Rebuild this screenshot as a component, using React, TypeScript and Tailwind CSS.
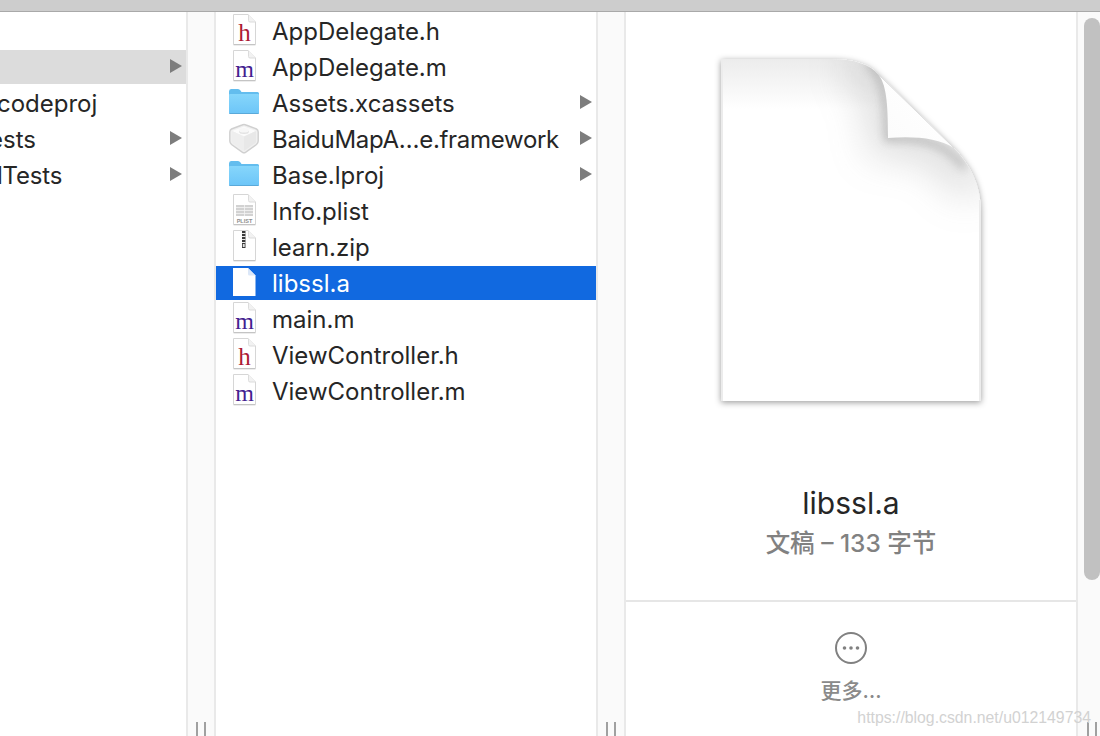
import React from "react";

const FONT = "[font-family:Inter,'Noto_Sans_CJK_SC',sans-serif]";

function DocShape({ fill = "#fff" }: { fill?: string }) {
  return (
    <>
      <path d="M5.500 .5H20L27.500 8V30Q27.500 30.500 27 30.500H6Q5.500 30.500 5.500 30Z" fill={fill} stroke="#d6d6d6" strokeWidth="1" />
      <path d="M5.500 30.800H27.500" stroke="#b5b5b5" strokeWidth=".8" />
      <path d="M20.500 .5V6.500Q20.500 8 22 8H27.500" fill="#f2f2f2" stroke="#dcdcdc" strokeWidth="1" />
    </>
  );
}

function LetterDoc({ letter }: { letter: "h" | "m" }) {
  return (
    <svg width="32" height="34" viewBox="0 0 32 34" className="shrink-0">
      <DocShape />
      <text
        x="16.500"
        y="26.500"
        textAnchor="middle"
        fontSize={letter === "h" ? 25 : 24}
        fontFamily="'Liberation Serif', serif"
        fill={letter === "h" ? "#ad1b35" : "#43208f"}
      >
        {letter}
      </text>
    </svg>
  );
}

function FolderIcon() {
  return (
    <svg width="32" height="34" viewBox="0 0 32 34" className="shrink-0">
      <defs>
        <linearGradient id="fold" x1="0" y1="0" x2="0" y2="1">
          <stop offset="0" stopColor="#86d6fb" />
          <stop offset="1" stopColor="#6cc5f8" />
        </linearGradient>
      </defs>
      <path d="M1 5.500Q1 3 3 3H10Q11.500 3 12.500 4.500L13.500 6H29.500Q31 6 31 7.500V12H1Z" fill="#63bdee" />
      <path d="M1 9Q1 8 2 8H30Q31 8 31 9V26.500Q31 28 29.500 28H2.500Q1 28 1 26.500Z" fill="url(#fold)" />
      <path d="M1 27H31V26.500Q31 28 29.500 28H2.500Q1 28 1 26.500Z" fill="#5aa9d9" />
    </svg>
  );
}

function FrameworkIcon() {
  return (
    <svg width="32" height="34" viewBox="0 0 32 34" className="shrink-0">
      <path
        d="M16 2.500Q17 2.500 18 3L28.500 7Q30.200 7.800 30.200 10V19Q30.200 21 28.500 22.500L17.500 30.300Q16 31.200 14.500 30.300L3.500 22.500Q1.800 21 1.800 19V10Q1.800 7.800 3.500 7L14 3Q15 2.500 16 2.500Z"
        fill="#f0f0f0"
        stroke="#d0d0d0"
        strokeWidth="1.400"
      />
      <path d="M4 9L16 14.500L28 9L16 4.500Z" fill="#fbfbfb" />
      <path d="M16 14.500V29L4 20.500V9Z" fill="#eeeeee" />
      <path d="M16 14.500V29L28 20.500V9Z" fill="#e8e8e8" />
      <ellipse cx="16" cy="9.500" rx="5" ry="2.500" fill="#e2e2e2" />
      <ellipse cx="16" cy="8.300" rx="5" ry="2.300" fill="#f7f7f7" />
    </svg>
  );
}

function PlistIcon() {
  return (
    <svg width="32" height="34" viewBox="0 0 32 34" className="shrink-0">
      <DocShape />
      <rect x="8" y="11" width="17" height="11" fill="#d2d2d2" />
      <path d="M8 13.500H25M8 16.500H25M8 19.500H25M16.500 11V22" stroke="#f4f4f4" strokeWidth=".8" />
      <text x="16.500" y="28.500" textAnchor="middle" fontSize="5.500" fontWeight="600" fontFamily="'Liberation Sans', sans-serif" fill="#8c8c8c">
        PLIST
      </text>
    </svg>
  );
}

function ZipIcon() {
  return (
    <svg width="32" height="34" viewBox="0 0 32 34" className="shrink-0">
      <DocShape />
      <rect x="14" y="1" width="3.500" height="17" fill="#3a3a3a" />
      <path d="M14 3.500H17.500M14 6.500H17.500M14 9.500H17.500M14 12.500H17.500" stroke="#e8e8e8" strokeWidth="1" />
      <rect x="14.800" y="14" width="1.900" height="3" fill="#e0e0e0" />
    </svg>
  );
}

function WhiteDoc() {
  return (
    <svg width="32" height="34" viewBox="0 0 32 34" className="shrink-0">
      <path d="M5 2H20L27.500 9.500V30H5Z" fill="#fff" />
      <path d="M20 2V8Q20 9.500 21.500 9.500H27.500" fill="#dbe7f8" />
    </svg>
  );
}

function Arrow() {
  return (
    <svg width="12" height="14" viewBox="0 0 12 14" className="mb-[2px] shrink-0">
      <path d="M0 0L12 7L0 14Z" fill="#7d7d7d" />
    </svg>
  );
}

function Grip() {
  return (
    <div className="mt-auto flex justify-center gap-[6px]">
      <div className="h-[14px] w-[2px] bg-[#a0a0a0]" />
      <div className="h-[14px] w-[2px] bg-[#a0a0a0]" />
    </div>
  );
}

function Gutter() {
  return (
    <div className="flex w-[30px] shrink-0 flex-col border-x-2 border-[#e9e9e9] bg-[#fafafa]">
      <Grip />
    </div>
  );
}

const files: { name: string; icon: React.ReactNode; arrow?: boolean; selected?: boolean; tight?: boolean }[] = [
  { name: "AppDelegate.h", icon: <LetterDoc letter="h" /> },
  { name: "AppDelegate.m", icon: <LetterDoc letter="m" /> },
  { name: "Assets.xcassets", icon: <FolderIcon />, arrow: true },
  { name: "BaiduMapA…e.framework", icon: <FrameworkIcon />, arrow: true, tight: true },
  { name: "Base.lproj", icon: <FolderIcon />, arrow: true },
  { name: "Info.plist", icon: <PlistIcon /> },
  { name: "learn.zip", icon: <ZipIcon /> },
  { name: "libssl.a", icon: <WhiteDoc />, selected: true },
  { name: "main.m", icon: <LetterDoc letter="m" /> },
  { name: "ViewController.h", icon: <LetterDoc letter="h" /> },
  { name: "ViewController.m", icon: <LetterDoc letter="m" /> },
];

const PAGE = "M721 59H832C855 59 870 65 878 74L954 148C970 165 981 185 981 212V401H721Z";

function BigDoc() {
  return (
    <svg width="280" height="370" viewBox="711 49 280 370" className="block">
      <defs>
        <filter id="sh" x="-10%" y="-10%" width="120%" height="120%">
          <feDropShadow dx="0" dy="1.500" stdDeviation="3" floodColor="#000" floodOpacity=".4" />
        </filter>
        <filter id="b1" x="-40%" y="-40%" width="180%" height="180%">
          <feGaussianBlur stdDeviation="5" />
        </filter>
        <filter id="b2" x="-60%" y="-60%" width="220%" height="220%">
          <feGaussianBlur stdDeviation="20" />
        </filter>
        <linearGradient id="topg" x1="0" y1="0" x2="0" y2="1">
          <stop offset="0" stopColor="#ececec" />
          <stop offset="1" stopColor="#ffffff" />
        </linearGradient>
        <linearGradient id="flap" x1="0" y1="1" x2="1" y2="0">
          <stop offset="0" stopColor="#fbfbfb" />
          <stop offset=".7" stopColor="#ffffff" />
          <stop offset="1" stopColor="#e6e6e6" />
        </linearGradient>
        <clipPath id="pg">
          <path d={PAGE} />
        </clipPath>
      </defs>
      <path d={PAGE} fill="#fff" filter="url(#sh)" />
      <g clipPath="url(#pg)">
        <rect x="721" y="59" width="260" height="50" fill="url(#topg)" />
        <path d="M850 62C880 72 888 100 888 138C920 134 945 142 975 190" fill="none" stroke="#8f8f8f" strokeWidth="34" filter="url(#b2)" opacity=".34" />
        <path d="M868 62C884 76 888 100 888 138C920 136 945 142 965 168" fill="none" stroke="#8a8a8a" strokeWidth="6" filter="url(#b1)" opacity=".55" />
        <rect x="721" y="59" width="2" height="342" fill="#ececec" />
        <rect x="979" y="200" width="2" height="201" fill="#ececec" />
      </g>
      <path d="M878 74C886 84 888 100 888 138C915 136 938 138 954 148Z" fill="url(#flap)" />
      <path d="M878 74L954 148" stroke="#dcdcdc" strokeWidth="1" fill="none" />
    </svg>
  );
}

export default function App() {
  return (
    <div className={`relative flex h-[736px] w-[1100px] flex-col overflow-hidden bg-white text-[#262626] ${FONT}`}>
      <div className="h-[12px] shrink-0 border-b border-[#a9a9a9] bg-[#cdcdcd]" />
      <div className="flex min-h-0 flex-1">
        {/* first column */}
        <div className="flex w-[186px] shrink-0 flex-col gap-[2px] overflow-hidden pt-[2px] text-[24px]">
          <div className="h-[34px]" />
          <div className="flex h-[34px] items-center justify-end bg-[#dcdcdc] pr-[4px]">
            <Arrow />
          </div>
          <div className="flex h-[34px] items-center whitespace-nowrap">
            <span className="-ml-[3px] pt-[2px]">codeproj</span>
          </div>
          <div className="flex h-[34px] items-center justify-between whitespace-nowrap pr-[4px]">
            <span className="-ml-[11px] pt-[2px]">ests</span>
            <Arrow />
          </div>
          <div className="flex h-[34px] items-center justify-between whitespace-nowrap pr-[4px]">
            <span className="-ml-[3px] pt-[2px] tracking-[-0.2px]">lTests</span>
            <Arrow />
          </div>
        </div>
        <Gutter />
        {/* second column */}
        <div className="flex w-[380px] shrink-0 flex-col gap-[2px] pt-[2px] text-[24px]">
          {files.map((f) => (
            <div
              key={f.name}
              className={`flex h-[34px] items-center gap-[12px] pl-[12px] pr-[4px] whitespace-nowrap ${f.selected ? "bg-[#1169e0] text-white" : ""}`}
            >
              {f.icon}
              <span className={`flex-1 pt-[2px] ${f.tight ? "tracking-[-0.3px]" : ""}`}>{f.name}</span>
              {f.arrow && <Arrow />}
            </div>
          ))}
        </div>
        <Gutter />
        {/* preview */}
        <div className="flex w-[450px] shrink-0 flex-col">
          <div className="flex h-[590px] shrink-0 flex-col items-center border-b-2 border-[#e6e6e6] pt-[37px]">
            <BigDoc />
            <div className="mt-[64px] text-[30px] leading-[40px]">libssl.a</div>
            <div className="mt-[4px] text-[24.500px] font-medium leading-[32px] text-[#818181]">文稿 – 133 字节</div>
          </div>
          <div className="flex flex-col items-center pt-[29px]">
            <svg width="34" height="34" viewBox="0 0 34 34">
              <circle cx="17" cy="17" r="15" fill="none" stroke="#818181" strokeWidth="2" />
              <circle cx="10.500" cy="17" r="1.800" fill="#818181" />
              <circle cx="17" cy="17" r="1.800" fill="#818181" />
              <circle cx="23.500" cy="17" r="1.800" fill="#818181" />
            </svg>
            <div className="mt-[12px] text-[21px] font-medium leading-[28px] text-[#8a8a8a]">更多…</div>
          </div>
        </div>
        {/* scrollbar */}
        <div className="flex w-[24px] shrink-0 flex-col border-l-2 border-[#e9e9e9] bg-[#fafafa] pl-[6px] pt-[6px]">
          <div className="h-[562px] w-[16px] rounded-full bg-[#c1c1c1]" />
          <Grip />
        </div>
      </div>
      <div className="absolute bottom-[8px] right-[9px] text-[15.800px] leading-[20px] text-[#d2d2d2] [font-family:'Liberation_Sans',sans-serif]">
        https://blog.csdn.net/u012149734
      </div>
    </div>
  );
}
